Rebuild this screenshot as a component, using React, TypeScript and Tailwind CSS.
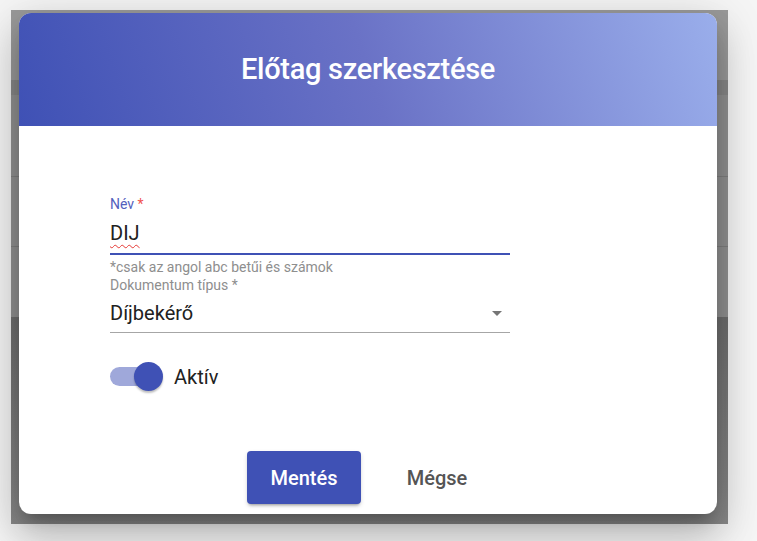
export default function App() {
  return (
    <div className="w-[757px] h-[541px] bg-[#f5f5f5] pl-[11px] pt-[10px] font-['Roboto','Liberation_Sans',sans-serif]">
      {/* dimmed page behind the dialog */}
      <div className="relative w-[717px] h-[514px] bg-[#929292] flex flex-col">
        <div className="h-[70px] bg-[#9b9b9b]" />
        <div className="h-[15px] bg-[#888888]" />
        <div className="h-[81px]" />
        <div className="h-px bg-[#808080]" />
        <div className="h-[69px]" />
        <div className="h-px bg-[#808080]" />
        <div className="h-[70px]" />
        <div className="flex-1 bg-linear-to-b from-[#6f6f6f] to-[#8a8a8a]" />

        {/* dialog */}
        <div className="absolute left-[8px] top-[3px] w-[698px] rounded-[12px] bg-white overflow-hidden shadow-[0_11px_15px_-7px_rgba(0,0,0,0.25),0_24px_38px_3px_rgba(0,0,0,0.16),0_9px_46px_8px_rgba(0,0,0,0.12)]">
          <div className="h-[113px] flex items-center justify-center bg-[linear-gradient(72deg,#3f51b5_0%,#6a72c6_50%,#9aaeeb_100%)]">
            <h1 className="text-white text-[29px] font-medium tracking-[-0.3px]">Előtag szerkesztése</h1>
          </div>

          <div className="pt-[70px] pl-[91px] pb-[10px]">
            <div className="w-[400px]">
              <div className="text-[14px] leading-4 text-[#5360bd]">
                Név <span className="text-[#ef5350]">*</span>
              </div>
              <div className="mt-[9px] pb-[6px] border-b-2 border-[#3f51b5]">
                <span className="text-[20px] leading-6 text-[#212121] underline decoration-wavy decoration-[#e53935] decoration-1 underline-offset-[4px]">
                  DIJ
                </span>
              </div>
              <div className="mt-[4px] text-[14px] leading-4 text-[#8e8e8e]">
                *csak az angol abc betűi és számok
              </div>
              <div className="mt-[2px] text-[14px] leading-4 text-[#8e8e8e]">Dokumentum típus *</div>
              <div className="mt-[8px] pb-[7px] border-b border-[#a6a6a6] flex items-center justify-between">
                <span className="text-[20px] leading-6 text-[#212121]">Díjbekérő</span>
                <svg width="10" height="5" viewBox="0 0 10 5" className="mr-[8px]">
                  <path d="M0 0 L10 0 L5 5 Z" fill="#757575" />
                </svg>
              </div>
            </div>

            <div className="mt-[29px] flex items-center">
              <div className="relative w-[53px] h-[29px]">
                <div className="absolute left-0 top-[5px] w-[46px] h-[19px] rounded-full bg-[#9fa8da]" />
                <div className="absolute right-0 top-0 w-[29px] h-[29px] rounded-full bg-[#3f51b5] shadow-[0_2px_2px_rgba(0,0,0,0.25)]" />
              </div>
              <span className="ml-[11px] text-[20px] leading-6 text-[#212121]">Aktív</span>
            </div>

            <div className="mt-[60px] -ml-[91px] flex justify-center gap-[24px]">
              <button className="w-[114px] h-[53px] rounded-[4px] bg-[#3f51b5] text-white text-[20px] font-medium shadow-[0_3px_3px_-2px_rgba(0,0,0,0.3),0_2px_4px_rgba(0,0,0,0.15)]">
                Mentés
              </button>
              <button className="w-[104px] h-[53px] rounded-[4px] text-[#555555] text-[20px] font-medium">
                Mégse
              </button>
            </div>
          </div>
        </div>
      </div>
    </div>
  );
}
